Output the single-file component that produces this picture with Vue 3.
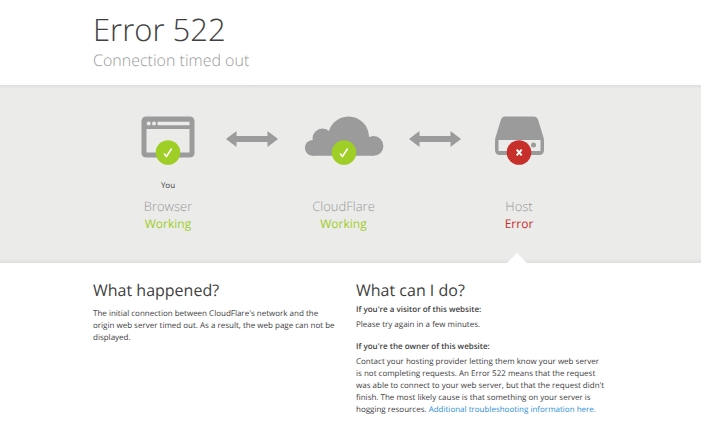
<template>
  <div class="error-page">
    <header class="wrapper header">
      <h1>Error 522</h1>
      <h2>Connection timed out</h2>
    </header>

    <section class="diagnostic">
      <div class="wrapper">
        <div class="status-row">
          <template v-for="(item, i) in statuses" :key="item.name">
            <svg v-if="i > 0" class="arrow" viewBox="0 0 52 16" aria-hidden="true">
              <path d="M0 8 10.500 0V5H41.500V0L52 8 41.500 16V11H10.500V16Z" />
            </svg>
            <div class="status">
              <svg class="status-icon" viewBox="0 0 80 50" aria-hidden="true">
                <g v-if="item.icon === 'browser'" class="shape">
                  <path
                    fill-rule="evenodd"
                    d="M18.500 .5H61.500Q66.500 .5 66.500 5.500V36.500Q66.500 41.500 61.500 41.500H18.500Q13.500 41.500 13.500 36.500V5.500Q13.500 .5 18.500 .5ZM18.500 13V36.500H61.500V13ZM29.500 5.700V9.300H61.500V5.700Z"
                  />
                  <circle class="hole" cx="20.700" cy="7.500" r="2" />
                  <circle class="hole" cx="26" cy="7.500" r="2" />
                </g>
                <g v-else-if="item.icon === 'cloud'" class="shape">
                  <circle cx="8.800" cy="31.800" r="7.900" />
                  <circle cx="18.500" cy="22.500" r="10" />
                  <circle cx="44.500" cy="21" r="20.500" />
                  <circle cx="69.500" cy="29.900" r="9.900" />
                  <path d="M8.800 24 18 16H62L69.500 30V39.700H8.800Z" />
                </g>
                <g v-else class="shape">
                  <path
                    fill-rule="evenodd"
                    d="M25.500 .5H54.500Q57.800 .5 59 3.500L64.500 21.500Q65 23 65 25V34Q65 39 60 39H21Q16 39 16 34V25Q16 23 16.500 21.500L22 3.500Q23.200 .5 25.500 .5ZM19.500 24V35H61.500V24Z"
                  />
                  <circle cx="54.500" cy="29" r="2.500" />
                </g>
                <circle class="badge" :class="{ bad: !item.ok }" cx="40" cy="36.500" r="12.300" />
                <path v-if="item.ok" class="mark tick" d="M36 37.500 38.500 40.500 43.700 32.500" />
                <path v-else class="mark" d="M37.700 33.700 42.700 39.300M42.700 33.700 37.700 39.300" />
              </svg>
              <span class="location">{{ item.location }}</span>
              <h3>{{ item.name }}</h3>
              <span class="state" :class="{ failed: !item.ok }">{{ item.state }}</span>
              <span v-if="!item.ok" class="pointer"></span>
            </div>
          </template>
        </div>
      </div>
    </section>

    <main class="wrapper columns">
      <section>
        <h2>What happened?</h2>
        <p class="reason">
          The initial connection between CloudFlare's network and the origin web server timed out.
          As a result, the web page can not be displayed.
        </p>
      </section>
      <section class="advice">
        <h2>What can I do?</h2>
        <h5>If you're a visitor of this website:</h5>
        <p>Please try again in a few minutes.</p>
        <h5>If you're the owner of this website:</h5>
        <p>
          Contact your hosting provider letting them know your web server is not completing
          requests. An Error 522 means that the request was able to connect to your web server, but
          that the request didn't finish. The most likely cause is that something on your server is
          hogging resources. <a href="#">Additional troubleshooting information here.</a>
        </p>
      </section>
    </main>
  </div>
</template>

<script setup>
const statuses = [
  { icon: 'browser', location: 'You', name: 'Browser', state: 'Working', ok: true },
  { icon: 'cloud', location: '', name: 'CloudFlare', state: 'Working', ok: true },
  { icon: 'host', location: '', name: 'Host', state: 'Error', ok: false }
]
</script>

<style>
body {
  background: #fff;
}
</style>

<style scoped>
.error-page {
  font-family: 'Open Sans', sans-serif;
  font-size: 8px;
  line-height: 12px;
  color: #404040;
  text-rendering: geometricPrecision;
}

h1,
h2,
h3,
h5,
p {
  margin: 0;
}

.wrapper {
  max-width: 515px;
  margin: 0 auto;
}

.header {
  padding: 11px 0 15px;
}

.header h1 {
  font-size: 31px;
  font-weight: 300;
  line-height: 39px;
}

.header h2 {
  font-size: 16px;
  font-weight: 300;
  line-height: 20px;
  color: #999;
}

.diagnostic {
  padding: 31px 0 0;
  background:
    linear-gradient(#dedede, #ebebea) top / 100% 4px no-repeat,
    linear-gradient(#ebebea, #dedede) bottom / 100% 4px no-repeat,
    #ebebea;
}

.status-row {
  display: grid;
  grid-template-columns: 116fr 52px 131fr 52px 116fr;
  min-height: 147px;
  margin: 0 31px 0 17px;
}

.arrow {
  width: 52px;
  height: 16px;
  margin-top: 15px;
  fill: #9b9b9b;
}

.status {
  display: flex;
  flex-direction: column;
  align-items: center;
}

.status-icon {
  width: 80px;
  height: 50px;
}

.shape {
  fill: #9b9b9b;
}

.hole {
  fill: #ebebea;
}

.badge {
  fill: #9fce26;
}

.badge.bad {
  fill: #c72f2a;
}

.mark {
  fill: none;
  stroke: #fff;
  stroke-width: 2;
}

.tick {
  stroke-width: 1.6;
}

.location {
  height: 12px;
  margin-top: 14px;
}

.status h3 {
  margin-top: 6px;
  font-size: 13px;
  font-weight: 300;
  line-height: 17px;
  color: #999;
}

.state {
  font-size: 12px;
  line-height: 17px;
  color: #9fce26;
}

.state.failed {
  color: #c72f2a;
}

.pointer {
  width: 20px;
  height: 10px;
  margin: auto 4px 0 0;
  background: #fff;
  clip-path: polygon(50% 0, 100% 100%, 0 100%);
}

.columns {
  display: grid;
  grid-template-columns: 1fr 1fr;
  gap: 11px;
  padding: 16px 0 0;
}

.columns section {
  padding-right: 4px;
}

.columns .advice {
  padding-right: 2px;
}

.columns h2 {
  font-size: 16px;
  font-weight: 400;
  line-height: 22px;
}

.reason {
  margin-top: 7px;
}

.columns h5 {
  margin: 3px 0;
  font-size: 8px;
  font-weight: 600;
}

.columns p + h5 {
  margin-top: 10px;
}

a {
  color: #2f8fd8;
  text-decoration: none;
}
</style>
